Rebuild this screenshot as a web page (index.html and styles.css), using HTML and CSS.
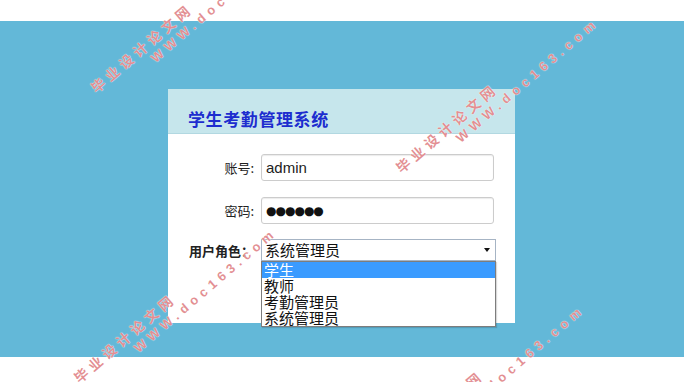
FILE: index.html
```html
<!DOCTYPE html>
<html lang="zh-CN">
<head>
<meta charset="utf-8">
<title>学生考勤管理系统</title>
<link rel="stylesheet" href="styles.css">
</head>
<body>
<div class="top"></div>
<div class="band">
  <div class="card">
    <div class="card-head"><h1 class="title">学生考勤管理系统</h1></div>
    <form class="form">
      <label class="lbl" for="acc">账号:</label>
      <input id="acc" class="field" type="text" value="admin">
      <label class="lbl" for="pwd">密码:</label>
      <input id="pwd" class="field field-pass" type="text" value="●●●●●●" aria-label="密码">
      <span class="lbl lbl-bold">用户角色：</span>
      <div class="select-wrap">
        <div class="select"><span>系统管理员</span><span class="arrow"></span></div>
        <ul class="options">
          <li class="opt opt-active">学生</li>
          <li class="opt">教师</li>
          <li class="opt">考勤管理员</li>
          <li class="opt">系统管理员</li>
        </ul>
      </div>
    </form>
  </div>
</div>
<div class="watermarks">
  <div class="wm wm-a"><div class="wm-cn">毕业设计论文网</div><div class="wm-en">WWW.doc163.com</div></div>
  <div class="wm wm-b"><div class="wm-cn">毕业设计论文网</div><div class="wm-en">WWW.doc163.com</div></div>
  <div class="wm wm-c"><div class="wm-cn">毕业设计论文网</div><div class="wm-en">WWW.doc163.com</div></div>
  <div class="wm wm-d"><div class="wm-cn">毕业设计论文网</div><div class="wm-en">WWW.doc163.com</div></div>
</div>
</body>
</html>
```

FILE: styles.css
```css
html, body {
  margin: 0;
  padding: 0;
  background: #ffffff;
}
body {
  font-family: "Noto Sans CJK SC", "Liberation Sans", sans-serif;
  width: 684px;
  height: 382px;
  overflow: hidden;
  position: relative;
}
.top {
  height: 21px;
}
.band {
  height: 336px;
  background: #63b8d8;
  padding: 68px 0 0 168px;
  box-sizing: border-box;
}
.card {
  width: 347px;
  height: 234px;
  background: #ffffff;
}
.card-head {
  background: #c6e6ec;
  border-bottom: 1px solid #b2d8e1;
  padding: 20px 0 0 20px;
  height: 24px;
}
.title {
  margin: 0;
  font-size: 17px;
  line-height: 20px;
  font-weight: bold;
  letter-spacing: 0.6px;
  color: #1d2dcf;
}
.form {
  margin: 0;
  padding-top: 20px;
  display: grid;
  grid-template-columns: 86px 235px;
  column-gap: 7px;
  row-gap: 16px;
  align-items: center;
}
.lbl {
  text-align: right;
  font-size: 13px;
  color: #222222;
  line-height: 16px;
}
.lbl-bold {
  font-weight: bold;
}
.field {
  box-sizing: border-box;
  width: 233px;
  height: 27px;
  margin: 0;
  border: 1px solid #cccccc;
  border-radius: 3px;
  padding: 0 4px;
  font-family: "Liberation Sans", sans-serif;
  font-size: 15px;
  color: #222222;
  background: #ffffff;
  box-shadow: inset 0 1px 1px rgba(0, 0, 0, 0.08);
  outline: none;
}
.field-pass {
  font-family: "DejaVu Sans", sans-serif;
  font-size: 12px;
  letter-spacing: -1px;
  color: #111111;
}
.select-wrap {
  position: relative;
  width: 235px;
  margin-top: -1px;
}
.select {
  box-sizing: border-box;
  height: 22px;
  border: 1px solid #a6b4c4;
  background: #ffffff;
  padding: 0 5px 0 3px;
  display: flex;
  align-items: center;
  justify-content: space-between;
  font-size: 15px;
  line-height: 20px;
  color: #111111;
}
.arrow {
  width: 0;
  height: 0;
  border-left: 3.5px solid transparent;
  border-right: 3.5px solid transparent;
  border-top: 4px solid #111111;
}
.options {
  position: absolute;
  top: 22px;
  left: 0;
  width: 235px;
  box-sizing: border-box;
  margin: 0;
  padding: 0;
  list-style: none;
  background: #ffffff;
  border: 1px solid #7d7d7d;
  box-shadow: 1px 1px 1px rgba(0, 0, 0, 0.15);
}
.opt {
  height: 16px;
  line-height: 16px;
  font-size: 15px;
  padding-left: 2px;
  color: #111111;
  white-space: nowrap;
}
.opt-active {
  background: #3a9bff;
  color: #ffffff;
}
.watermarks {
  position: absolute;
  left: 0;
  top: 0;
  width: 684px;
  height: 382px;
  overflow: hidden;
  pointer-events: none;
}
.wm {
  position: absolute;
  transform: rotate(-40.6deg);
  transform-origin: 7px 8px;
  white-space: nowrap;
  color: rgba(200, 30, 40, 0.5);
  font-weight: bold;
  text-shadow: 0 0 1px rgba(255, 255, 255, 0.9), 0 0 1px rgba(255, 255, 255, 0.9);
}
.wm-cn {
  font-family: "Noto Sans CJK SC", sans-serif;
  font-size: 14px;
  line-height: 16px;
  letter-spacing: 4.4px;
}
.wm-en {
  font-family: "Liberation Sans", sans-serif;
  font-size: 13px;
  line-height: 14px;
  letter-spacing: 4.9px;
  margin: 2px 0 0 65px;
}
.wm-a { left: 91px; top: 77px; }
.wm-b { left: 396px; top: 157px; }
.wm-c { left: 74px; top: 367px; }
.wm-d { left: 382px; top: 444px; }
```
